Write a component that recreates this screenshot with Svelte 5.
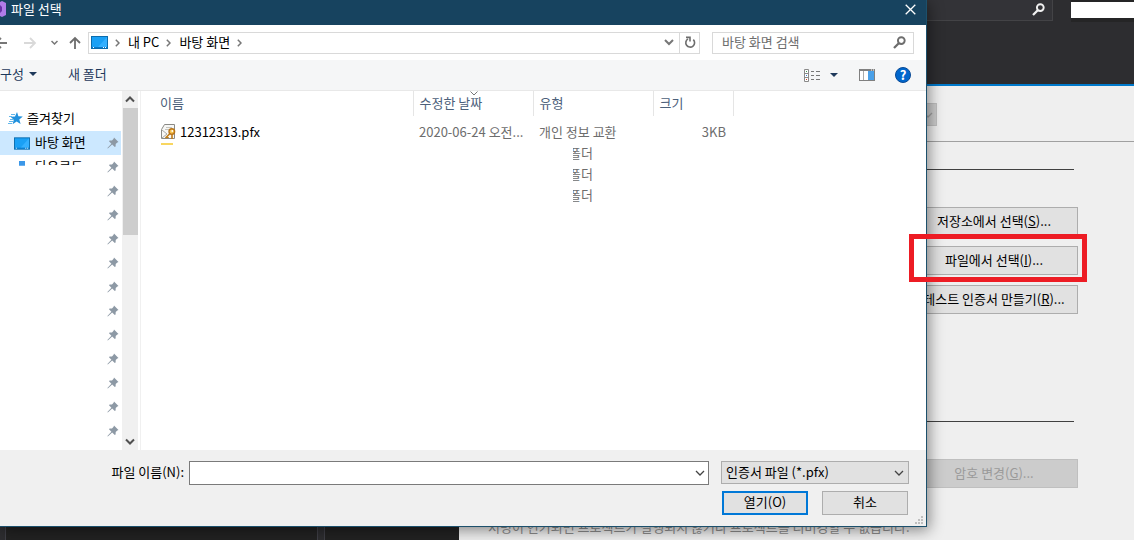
<script>
  let fileName = $state('')
  let filter = $state('pfx')
  let selected = $state(0)

  const certButtons = [
    { label: '저장소에서 선택', key: 'S' },
    { label: '파일에서 선택', key: 'I', marked: true },
    { label: '테스트 인증서 만들기', key: 'R' },
  ]

  const folders = ['바탕 화면', '다운로드', '', '', '', '', '', '', '', '', '', '', '']
</script>

{#snippet chevron(size)}
  <svg width={size} height={size} viewBox="0 0 10 10" aria-hidden="true">
    <path d="M1 3 L5 7 L9 3" fill="none" stroke="currentColor" stroke-width="1.3" />
  </svg>
{/snippet}

{#snippet pin()}
  <svg class="pin" width="12" height="12" viewBox="0 0 12 12" aria-hidden="true">
    <path d="M7 0.5 L11.5 5 L10.3 5.4 L8.7 7 L8.6 9.5 L7.8 10 L5.2 7.5 L0.8 11.5 L0.4 11 L4.4 6.7 L2 4.2 L2.6 3.4 L5 3.4 L6.6 1.8 Z" fill="#8d99a5" />
  </svg>
{/snippet}

{#snippet desktop(w, h)}
  <svg class="desk" width={w} height={h} viewBox="0 0 17 13" aria-hidden="true">
    <rect x="0.5" y="0.5" width="16" height="12" fill="#1aa0f5" stroke="#0a6cae" />
    <path d="M16 1 L16 11 L7 11 Z" fill="#34b0ff" />
    <path d="M1 11.5 H16" stroke="#0a78c8" />
    <path d="M2 11.5 H3 M12 11.5 H13 M14 11.5 H15" stroke="#fff" />
  </svg>
{/snippet}

{#snippet lens()}
  <svg width="13" height="13" viewBox="0 0 13 13" aria-hidden="true">
    <circle cx="8.3" cy="4.6" r="3.4" fill="none" stroke="currentColor" stroke-width="1.9" />
    <path d="M6 7 L1 12" stroke="currentColor" stroke-width="2.3" />
  </svg>
{/snippet}

<div class="studio">
  <header class="studio-bar">
    <button class="quick" aria-label="검색">{@render lens()}</button>
    <div class="account"></div>
  </header>

  <main class="signing">
    <div class="platform">
      <button class="combo" disabled aria-label="플랫폼">{@render chevron(10)}</button>
    </div>
    <section class="group cert">
      {#each certButtons as b}
        <button class="cert-btn" class:marked={b.marked}>{b.label}(<u>{b.key}</u>)...</button>
      {/each}
    </section>
    <section class="group strong">
      <button class="cert-btn" disabled>암호 변경(<u>G</u>)...</button>
    </section>
  </main>

  <footer class="studio-foot">
    <div class="dock"></div>
    <div class="dock small"></div>
    <p>서명이 연기되면 프로젝트가 실행되지 않거나 프로젝트를 디버깅할 수 없습니다.</p>
  </footer>
</div>

<div class="dialog" role="dialog" aria-label="파일 선택">
  <div class="title">
    <svg width="6" height="18" viewBox="0 0 6 18" aria-hidden="true">
      <path d="M0 2 L2 1 L6 3 V15 L2 17 L0 16 Z" fill="#b07be8" />
      <path d="M0 5 L2 7 V11 L0 13 Z" fill="#6a32a8" />
    </svg>
    <span>파일 선택</span>
    <button class="close" aria-label="닫기">
      <svg width="11" height="11" viewBox="0 0 11 11">
        <path d="M0.7 0.7 L10.3 10.3 M10.3 0.7 L0.7 10.3" stroke="#fff" stroke-width="1.3" />
      </svg>
    </button>
  </div>

  <nav class="address">
    <button class="nav-btn back" aria-label="뒤로">
      <svg width="14" height="12" viewBox="0 0 14 12"><path d="M13 6 H2 M7 1 L2 6 L7 11" fill="none" stroke="#777" stroke-width="1.8" /></svg>
    </button>
    <button class="nav-btn" aria-label="앞으로" disabled>
      <svg width="13" height="12" viewBox="0 0 13 12"><path d="M0 6 H11 M6 1 L11 6 L6 11" fill="none" stroke="#d9d9d9" stroke-width="1.8" /></svg>
    </button>
    <button class="nav-btn recent" aria-label="최근 위치">
      <svg width="7" height="6" viewBox="0 0 7 6"><path d="M0.5 1 L3.5 4 L6.5 1" fill="none" stroke="#777" stroke-width="1.5" /></svg>
    </button>
    <button class="nav-btn up" aria-label="위로">
      <svg width="12" height="13" viewBox="0 0 12 13"><path d="M6 13 V2 M1 7 L6 2 L11 7" fill="none" stroke="#6d6d6d" stroke-width="1.8" /></svg>
    </button>
    <div class="path">
      {@render desktop(17, 13)}
      {#each ['내 PC', '바탕 화면'] as part}
        <svg class="sep" width="5" height="8" viewBox="0 0 5 8" aria-hidden="true"><path d="M0.8 0.8 L4 4 L0.8 7.2" fill="none" stroke="#777" stroke-width="1.5" /></svg>
        <a href="#path">{part}</a>
      {/each}
      <svg class="sep" width="5" height="8" viewBox="0 0 5 8" aria-hidden="true"><path d="M0.8 0.8 L4 4 L0.8 7.2" fill="none" stroke="#777" stroke-width="1.5" /></svg>
      <button class="history" aria-label="이전 위치">
        <svg width="10" height="7" viewBox="0 0 10 7"><path d="M1 1 L5 5 L9 1" fill="none" stroke="#777" stroke-width="2" /></svg>
      </button>
      <button class="refresh" aria-label="새로 고침">
        <svg width="12" height="13" viewBox="0 0 12 13">
          <path d="M9.3 3.6 A4.4 4.4 0 1 1 4 2.9" fill="none" stroke="#6d6d6d" stroke-width="1.6" />
          <path d="M2 1.4 H6 V5.6" fill="none" stroke="#6d6d6d" stroke-width="1.6" />
        </svg>
      </button>
    </div>
    <label class="search">
      <input type="search" placeholder="바탕 화면 검색" aria-label="바탕 화면 검색" />
      {@render lens()}
    </label>
  </nav>

  <div class="tools">
    <button class="tool">구성 <i class="tri"></i></button>
    <button class="tool">새 폴더</button>
    <span class="grow"></span>
    <button class="tool view" aria-label="보기">
      <svg width="17" height="13" viewBox="0 0 17 13">
        <path d="M0.5 0.5 H4.5 V12.5 H0.5 Z M0.5 4.5 H4.5 M0.5 8.5 H4.5" fill="#fff" stroke="#8a8a8a" />
        <path d="M2 2.5 H3" stroke="#3a9a50" /><path d="M2 6.5 H3" stroke="#2f7fd0" /><path d="M2 10.5 H3" stroke="#d04020" />
        <path d="M7 2.5 H10 M12 2.5 H16 M7 6.5 H10 M12 6.5 H16 M7 10.5 H10 M12 10.5 H16" stroke="#777" />
      </svg>
      <i class="tri"></i>
    </button>
    <button class="tool preview" aria-label="미리 보기 창">
      <svg width="16" height="12" viewBox="0 0 16 12">
        <rect x="0.5" y="0.5" width="15" height="11" fill="#fff" stroke="#808080" />
        <path d="M0 1 H16" stroke="#808080" stroke-width="2" />
        <path d="M4.5 2 V11" stroke="#aaa" />
        <rect x="9" y="2" width="6" height="9" fill="#4aa0e8" />
        <path d="M12 1 H13 M14 1 H15" stroke="#fff" />
      </svg>
    </button>
    <button class="tool help" aria-label="도움말">?</button>
  </div>

  <div class="browser">
    <aside>
      <div class="tree">
        <div class="tree-head">
          <svg width="15" height="13" viewBox="0 0 15 13" aria-hidden="true">
            <path d="M9 0 L10.4 4.3 L14.8 4.6 L11.3 7.4 L12.6 12 L8.6 9.5 L4.6 12.3 L5.8 7.7 L2.5 4.8 L7 4.4 Z" fill="#2191dd" />
            <path d="M3 2.5 H7 M1 4.5 H4 M2 7.5 H6 M1 9.5 H5 M0 11.5 H4" stroke="#62b6ea" />
          </svg>
          <span>즐겨찾기</span>
        </div>
        {#each folders as folder, i}
          <button class="node" class:active={selected === i} class:cut={i === 1} aria-label={folder || '폴더'} onclick={() => (selected = i)}>
            {#if i === 0}
              {@render desktop(16, 13)}
            {:else if i === 1}
              <svg width="16" height="13" viewBox="0 0 16 13" aria-hidden="true"><path d="M5 0 H11 V7 H15 L8 13 L1 7 H5 Z" fill="#3b97e8" /></svg>
            {/if}
            <span class="node-name">{folder}</span>
            {@render pin()}
          </button>
        {/each}
      </div>
      <div class="scroll">
        <svg width="10" height="7" viewBox="0 0 10 7" aria-hidden="true"><path d="M1 5.5 L5 1.5 L9 5.5" fill="none" stroke="#505050" stroke-width="2" /></svg>
        <div class="thumb"></div>
        <svg width="10" height="7" viewBox="0 0 10 7" aria-hidden="true"><path d="M1 1.5 L5 5.5 L9 1.5" fill="none" stroke="#505050" stroke-width="2" /></svg>
      </div>
    </aside>

    <div class="files">
      <table>
        <colgroup><col class="c-name" /><col class="c-col" /><col class="c-col" /><col class="c-size" /></colgroup>
        <thead>
          <tr>
            <th>이름</th>
            <th class="sorted">수정한 날짜
              <svg width="8" height="5" viewBox="0 0 8 5" aria-hidden="true"><path d="M0.5 0.5 L4 4 L7.5 0.5" fill="none" stroke="#777" /></svg>
            </th>
            <th>유형</th>
            <th>크기</th>
          </tr>
        </thead>
        <tbody>
          <tr class="first">
            <td class="name">
              <svg width="16" height="16" viewBox="0 0 16 16" aria-hidden="true">
                <path d="M3.5 0.5 H13.5 V14.5 H0.5 V5.5 Z" fill="#f7f7f5" stroke="#8a8a86" />
                <path d="M5 3.5 H11 M4 5.5 H8" stroke="#c5c5c0" />
                <path d="M1 6 L6 10 L1 14" fill="none" stroke="#a8a8a4" />
                <path d="M9.5 9 L4.5 14 M6 12.5 L7.5 14 M11 10 V15" stroke="#c07c18" stroke-width="1.6" />
                <circle cx="10.8" cy="7.6" r="2.8" fill="#f6c250" stroke="#b8741a" stroke-width="1.4" />
                <circle cx="11.3" cy="7" r="0.9" fill="#fff" />
              </svg>
              <span>12312313.pfx</span>
            </td>
            <td>2020-06-24 오전...</td>
            <td>개인 정보 교환</td>
            <td class="size">3KB</td>
          </tr>
          {#each [0, 1, 2] as row}
            <tr>
              <td class="sliver">{#if row === 0}<i></i>{/if}</td>
              <td></td>
              <td class="folder"><span>폴더</span></td>
              <td></td>
            </tr>
          {/each}
        </tbody>
      </table>
    </div>
  </div>

  <form class="open-form" onsubmit={(e) => e.preventDefault()}>
    <label class="name-label" for="file-name">파일 이름(N):</label>
    <div class="name-box">
      <input id="file-name" type="text" bind:value={fileName} />
      {@render chevron(10)}
    </div>
    <div class="filter">
      <select aria-label="파일 형식" bind:value={filter}>
        <option value="pfx">인증서 파일 (*.pfx)</option>
      </select>
      {@render chevron(10)}
    </div>
    <div class="actions">
      <button class="primary" type="submit">열기(O)</button>
      <button type="button">취소</button>
    </div>
    <svg class="grip" width="8" height="8" viewBox="0 0 8 8" aria-hidden="true">
      <path d="M6 0 h2 v2 h-2 z M3 3 h2 v2 h-2 z M6 3 h2 v2 h-2 z M0 6 h2 v2 h-2 z M3 6 h2 v2 h-2 z M6 6 h2 v2 h-2 z" fill="#bfbfbf" />
    </svg>
  </form>
</div>

<style>
  :global(body) {
    position: relative;
    overflow: hidden;
    background: #efefef;
    font-family: "Noto Sans CJK KR", sans-serif;
    font-size: 13px;
    line-height: 18px;
    color: #000;
  }

  button,
  input,
  select {
    box-sizing: border-box;
    font: inherit;
    color: inherit;
    margin: 0;
    padding: 0;
    border: none;
    border-radius: 0;
    background: none;
  }

  svg {
    display: block;
    flex: none;
  }

  .studio {
    display: flex;
    flex-direction: column;
    min-height: 100vh;
  }

  .studio-bar {
    display: flex;
    justify-content: flex-end;
    align-items: flex-start;
    gap: 18px;
    height: 84px;
    background: #2d2d30;
    border-bottom: 2px solid #007acc;
  }

  .quick {
    display: flex;
    justify-content: flex-end;
    align-items: center;
    width: 240px;
    height: 21px;
    padding: 0 7px 2px 0;
    background: #333337;
    border-right: 1px solid #434346;
    border-bottom: 1px solid #434346;
    color: #f1f1f1;
  }

  .account {
    width: 63px;
    height: 16px;
    background: #fff;
    border: solid #252526;
    border-width: 2px 0 4px;
  }

  .signing {
    flex: 1;
    display: flex;
    flex-direction: column;
    align-items: flex-end;
  }

  .platform {
    box-sizing: border-box;
    display: flex;
    justify-content: flex-end;
    width: 100%;
    height: 56px;
    padding: 17px 197px 0 0;
    border-bottom: 1px solid #a0a0a0;
  }

  .combo {
    width: 24px;
    height: 23px;
    padding-left: 9px;
    background: #ccc;
    border: 1px solid #bfbfbf;
    color: #a0a0a0;
  }

  .group {
    box-sizing: border-box;
    display: flex;
    flex-direction: column;
    align-items: flex-end;
    width: 100%;
    padding-right: 56px;
  }

  .group::before {
    content: '';
    align-self: stretch;
    height: 1px;
    margin-right: 4px;
    background: #404040;
  }

  .cert {
    gap: 10px;
    margin-top: 27px;
  }

  .cert::before {
    margin-bottom: 27px;
  }

  .strong {
    margin-top: 107px;
  }

  .strong::before {
    margin-bottom: 37px;
  }

  .cert-btn {
    width: 168px;
    height: 29px;
    padding-bottom: 2px;
    background: #e1e1e1;
    border: 1px solid #adadad;
    white-space: nowrap;
  }

  .cert-btn:disabled {
    background: #ccc;
    border-color: #bfbfbf;
    color: #9a9a9a;
  }

  .marked {
    position: relative;
  }

  /* annotation frame around the button, stays above the dialog */
  .marked::after {
    content: '';
    position: absolute;
    z-index: 2;
    inset: -13px -10px -8px -2px;
    border: 5px solid #ed1c24;
  }

  .studio-foot {
    display: flex;
    gap: 6px;
    height: 20px;
    padding-left: 5px;
    background: linear-gradient(90deg, #2d2d30 459px, transparent 459px);
  }

  .dock {
    box-sizing: border-box;
    width: 313px;
    background: #222;
    border: 1px solid #3f3f46;
    border-width: 0 1px;
  }

  .dock.small {
    width: 135px;
    border-right: none;
  }

  .studio-foot p {
    margin: 0 0 0 23px;
    line-height: 14px;
    color: #8c8c8c;
    white-space: nowrap;
  }

  .dialog {
    position: absolute;
    z-index: 1;
    top: 0;
    left: 0;
    right: 207px;
    background: #fff;
    border: 1px solid #1c506c;
    border-width: 0 1px 1px 0;
    box-shadow: 2px 3px 14px rgba(0, 0, 0, 0.45);
  }

  .title {
    display: flex;
    align-items: center;
    gap: 5px;
    height: 25px;
    background: #17435f;
    color: #fff;
  }

  .title span {
    flex: 1;
    padding-bottom: 8px;
  }

  .title svg {
    margin-bottom: 7px;
  }

  .close {
    padding-right: 10px;
  }

  .address {
    display: flex;
    align-items: center;
    height: 35px;
    padding-right: 12px;
  }

  .nav-btn {
    margin-right: 11px;
  }

  .back {
    margin-left: -6px;
    margin-right: 16px;
  }

  .recent {
    margin-left: 3px;
  }

  .up {
    margin-right: 7px;
  }

  .path {
    box-sizing: border-box;
    flex: 1;
    display: flex;
    align-items: center;
    height: 22px;
    margin-right: 12px;
    padding-left: 2px;
    border: 1px solid #d9d9d9;
  }

  .sep {
    margin: 0 8px 0 7px;
  }

  .path a {
    padding-bottom: 2px;
    color: #000;
    text-decoration: none;
  }

  .history {
    margin-left: auto;
    padding-right: 5px;
  }

  .refresh {
    display: flex;
    align-items: center;
    justify-content: center;
    width: 20px;
    height: 20px;
    border-left: 1px solid #d9d9d9;
  }

  .search {
    box-sizing: border-box;
    display: flex;
    align-items: center;
    width: 202px;
    height: 22px;
    padding: 0 7px 0 9px;
    border: 1px solid #d9d9d9;
    color: #6d6d6d;
  }

  .search input {
    flex: 1;
    min-width: 0;
    padding-bottom: 2px;
    outline: none;
  }

  .search input::placeholder {
    color: #6d6d6d;
  }

  .tools {
    display: flex;
    align-items: center;
    height: 30px;
    padding-right: 15px;
    background: #f5f6f7;
    border-bottom: 1px solid #e8e8e8;
    color: #1e395b;
  }

  .tool {
    display: flex;
    align-items: center;
    gap: 5px;
    margin-right: 31px;
    padding-bottom: 2px;
  }

  .grow {
    flex: 1;
  }

  .view {
    gap: 9px;
    margin-right: 21px;
  }

  .preview {
    margin-right: 20px;
  }

  .tri {
    border: 4px solid transparent;
    border-top-color: #1e395b;
    border-bottom: none;
  }

  .view,
  .preview {
    padding-bottom: 0;
  }

  .help {
    justify-content: center;
    box-sizing: border-box;
    width: 16px;
    height: 16px;
    margin-right: 0;
    padding-bottom: 0;
    border-radius: 50%;
    border: 1px solid #0a4a96;
    background: #0066cc;
    color: #fff;
    font-weight: 700;
  }

  .browser {
    display: flex;
    height: 359px;
  }

  aside {
    display: flex;
    width: 140px;
    border-right: 1px solid #f0f0f0;
  }

  .tree {
    flex: 1;
    overflow: hidden;
    padding-top: 15px;
  }

  .tree-head {
    display: flex;
    align-items: center;
    gap: 4px;
    height: 25px;
    padding-left: 8px;
  }

  .tree-head span {
    padding-bottom: 2px;
  }

  .node {
    display: flex;
    align-items: center;
    gap: 5px;
    width: 121px;
    height: 24px;
    padding: 0 2px 0 14px;
  }

  .node.active {
    background: #cce8ff;
  }

  .node-name {
    flex: 1;
    padding-bottom: 2px;
    text-align: left;
  }

  .node.cut > svg:first-child,
  .node.cut .node-name {
    clip-path: inset(0 0 60% 0);
  }

  .scroll {
    display: flex;
    flex-direction: column;
    align-items: center;
    width: 16px;
    margin-right: 2px;
    padding: 5px 0;
    background: #f0f0f0;
  }

  .thumb {
    width: 15px;
    height: 127px;
    margin: 5px 0 auto;
    background: #cdcdcd;
  }

  .files {
    flex: 1;
    min-width: 0;
  }

  table {
    table-layout: fixed;
    width: 592px;
    border-collapse: collapse;
    color: #6d6d6d;
  }

  .c-name {
    width: 272px;
  }

  .c-col {
    width: 120px;
  }

  .c-size {
    width: 80px;
  }

  th {
    height: 23px;
    padding: 0 6px 2px;
    border-right: 1px solid #e5e5e5;
    color: #4c607a;
    font-weight: 400;
    text-align: left;
  }

  th:first-child {
    padding-left: 19px;
  }

  .sorted {
    position: relative;
  }

  .sorted svg {
    position: absolute;
    top: 0;
    left: 56px;
  }

  td {
    height: 19px;
    padding: 0 6px 2px;
    overflow: hidden;
    white-space: nowrap;
  }

  .first td {
    padding-top: 6px;
  }

  .name {
    display: flex;
    align-items: center;
    gap: 3px;
    color: #000;
  }

  .first .name,
  .sliver {
    padding-left: 20px;
  }

  .size {
    text-align: right;
    padding-right: 7px;
  }

  .sliver {
    vertical-align: top;
  }

  .sliver i {
    display: block;
    width: 12px;
    height: 2px;
    background: #f8d660;
  }

  .folder {
    padding-left: 36px;
  }

  .folder span {
    clip-path: inset(0 0 0 4px);
    display: block;
  }

  .open-form {
    position: relative;
    display: grid;
    grid-template-columns: 184px 1fr 188px;
    grid-template-rows: 24px 24px;
    column-gap: 5px;
    row-gap: 6px;
    padding: 11px 17px 11px 0;
    background: #f0f0f0;
  }

  .name-label {
    align-self: center;
    padding-bottom: 2px;
    text-align: right;
  }

  .name-box,
  .filter {
    box-sizing: border-box;
    display: flex;
    align-items: center;
    border: 1px solid #7a7a7a;
    background: #fff;
    color: #444;
  }

  .name-box {
    margin-right: 7px;
    padding-right: 3px;
  }

  .name-box input {
    flex: 1;
    min-width: 0;
    padding: 0 4px;
    outline: none;
  }

  .filter {
    height: 23px;
    padding: 0 4px;
    border-color: #adadad;
    background: #e1e1e1;
  }

  .filter select {
    flex: 1;
    appearance: none;
    padding-bottom: 2px;
    color: #000;
  }

  .actions {
    grid-column: 3;
    display: grid;
    grid-template-columns: 1fr 1fr;
    gap: 14px;
    padding: 0 1px;
  }

  .actions button {
    padding-bottom: 2px;
    border: 1px solid #adadad;
    background: #e1e1e1;
  }

  .actions .primary {
    border: 2px solid #0078d7;
  }

  .grip {
    position: absolute;
    right: 3px;
    bottom: 2px;
  }
</style>
